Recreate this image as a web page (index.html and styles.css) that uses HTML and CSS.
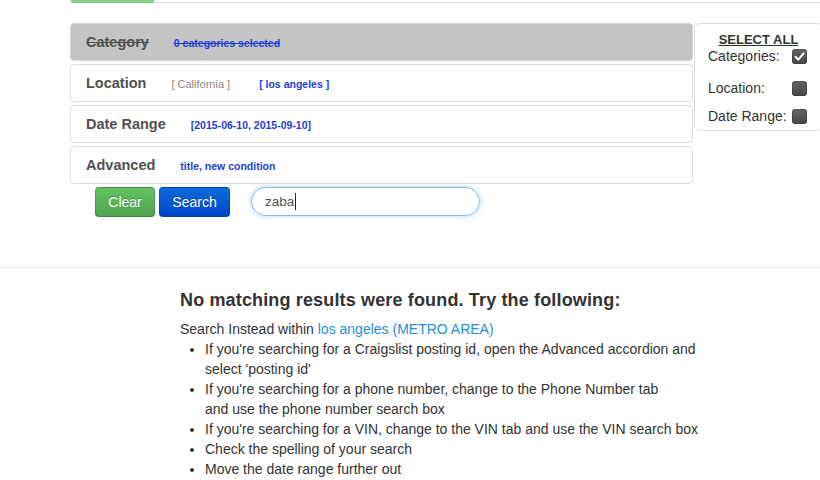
FILE: index.html
```html
<!DOCTYPE html>
<html lang="en">
<head>
<meta charset="utf-8">
<title>Search</title>
<link rel="stylesheet" href="styles.css">
</head>
<body>
<div class="tabbar"><div class="tab-active"></div><div class="tab-rest"></div></div>

<div class="filters">
  <div class="filter-col">
    <div class="accordion">
      <div class="acc-head disabled"><span class="acc-label">Category</span><span class="acc-value blue">0 categories selected</span></div>
      <div class="acc-head"><span class="acc-label">Location</span><span class="acc-value gray">[ California ]</span><span class="acc-value blue second">[ los angeles ]</span></div>
      <div class="acc-head"><span class="acc-label">Date Range</span><span class="acc-value blue">[2015-06-10, 2015-09-10]</span></div>
      <div class="acc-head"><span class="acc-label">Advanced</span><span class="acc-value blue">title, new condition</span></div>
    </div>
    <div class="toolbar">
      <button class="btn btn-success">Clear</button>
      <button class="btn btn-primary">Search</button>
      <div class="search-box"><span>zaba</span><span class="caret"></span></div>
    </div>
  </div>
  <div class="select-all">
    <div class="sa-title">SELECT ALL</div>
    <div class="sa-row first"><span>Categories:</span><span class="check checked"><svg viewBox="0 0 15 15" width="15" height="15"><path d="M3.5 7.8 L6.3 10.6 L11.6 4.3" fill="none" stroke="#fff" stroke-width="2" stroke-linecap="round" stroke-linejoin="round"/></svg></span></div>
    <div class="sa-row"><span>Location:</span><span class="check"></span></div>
    <div class="sa-row"><span>Date Range:</span><span class="check"></span></div>
  </div>
</div>

<div class="results">
  <h4 class="results-title">No matching results were found. Try the following:</h4>
  <div class="results-line">Search Instead within <a href="#" class="link">los angeles (METRO AREA)</a></div>
  <ul class="tips">
    <li>If you're searching for a Craigslist posting id, open the Advanced accordion and select 'posting id'</li>
    <li>If you're searching for a phone number, change to the Phone Number tab<br>and use the phone number search box</li>
    <li>If you're searching for a VIN, change to the VIN tab and use the VIN search box</li>
    <li>Check the spelling of your search</li>
    <li>Move the date range further out</li>
  </ul>
</div>
</body>
</html>
```

FILE: styles.css
```css
html, body {
  margin: 0;
  padding: 0;
  overflow: hidden;
  background: #fff;
}
body {
  font-family: "Liberation Sans", Arial, sans-serif;
  font-size: 14px;
  color: #333;
}

.tabbar {
  display: flex;
  height: 3px;
}
.tab-active {
  margin-left: 71px;
  width: 83px;
  height: 3px;
  background: #86cf86;
}
.tab-rest {
  flex: 1;
  height: 2px;
  border-bottom: 1px solid #dddddd;
}

.filters {
  display: flex;
  align-items: flex-start;
  margin-top: 20px;
  padding-left: 70px;
}
.filter-col {
  width: 623px;
  flex-shrink: 0;
}
.acc-head {
  box-sizing: border-box;
  height: 38px;
  margin-bottom: 3px;
  border: 1px solid #dddddd;
  border-radius: 4px;
  padding-left: 15px;
  line-height: 36px;
  white-space: nowrap;
  background: #fff;
}
.acc-head.disabled {
  background: #c4c4c4;
  border-color: #d4d4d4;
}
.acc-label {
  font-size: 14.5px;
  font-weight: bold;
  color: #505050;
}
.disabled .acc-label,
.disabled .acc-value {
  text-decoration: line-through;
}
.acc-value {
  margin-left: 25px;
}
.acc-value.blue {
  font-size: 10.5px;
  font-weight: bold;
  color: #1e3ed6;
}
.acc-value.gray {
  font-size: 11px;
  color: #888;
}
.acc-value.second {
  margin-left: 29px;
}

.toolbar {
  display: flex;
  align-items: flex-start;
  padding-left: 25px;
}
.btn {
  box-sizing: border-box;
  height: 30px;
  padding: 0;
  border: 1px solid rgba(0,0,0,0.15);
  border-bottom-color: rgba(0,0,0,0.3);
  border-radius: 4px;
  font-family: "Liberation Sans", Arial, sans-serif;
  font-size: 14px;
  color: #fff;
  text-shadow: 0 -1px 0 rgba(0,0,0,0.25);
  cursor: pointer;
}
.btn-success {
  background: linear-gradient(#64c364, #4fa34f);
  width: 60px;
  margin-right: 4px;
}
.btn-primary {
  background: linear-gradient(#0b6cd8, #0046c8);
  width: 71px;
}
.search-box {
  box-sizing: border-box;
  margin-left: 21px;
  width: 229px;
  height: 29px;
  border: 1px solid #80b8ea;
  border-radius: 15px;
  box-shadow: 0 0 5px rgba(102,175,233,0.55);
  padding-left: 13px;
  display: flex;
  align-items: center;
  font-size: 13.5px;
  color: #555;
}
.caret {
  display: inline-block;
  width: 0;
  height: 17px;
  border-left: 1px solid #222;
  margin-left: 1px;
}

.select-all {
  box-sizing: border-box;
  flex-shrink: 0;
  width: 129px;
  margin-left: 1px;
  border: 1px solid #dddddd;
  border-radius: 6px;
  padding: 8px 0 0 0;
}
.sa-title {
  text-align: center;
  font-size: 13px;
  font-weight: bold;
  line-height: 16px;
  text-decoration: underline;
  color: #333;
}
.sa-row {
  display: grid;
  grid-template-columns: 84px 15px;
  align-items: center;
  height: 28px;
  padding-left: 13px;
  font-size: 14px;
  color: #333;
}
.sa-row.first {
  margin-top: -6px;
  margin-bottom: 4px;
}
.check {
  display: block;
  width: 15px;
  height: 15px;
  border-radius: 3px;
  background: linear-gradient(#646464, #474747);
  box-shadow: inset 0 0 0 1px rgba(0,0,0,0.15);
}
.check svg {
  display: block;
}

.results {
  margin-top: 50px;
  border-top: 1px solid #e6e6e6;
  padding: 22px 0 0 180px;
}
.results-title {
  margin: 0 0 9px;
  font-size: 18px;
  line-height: 20px;
  font-weight: bold;
  letter-spacing: 0.15px;
  color: #333;
}
.results-line {
  line-height: 20px;
}
.link {
  color: #1e90d6;
  text-decoration: none;
}
.tips {
  margin: 0;
  padding-left: 25px;
  width: 520px;
  line-height: 20px;
}
```
